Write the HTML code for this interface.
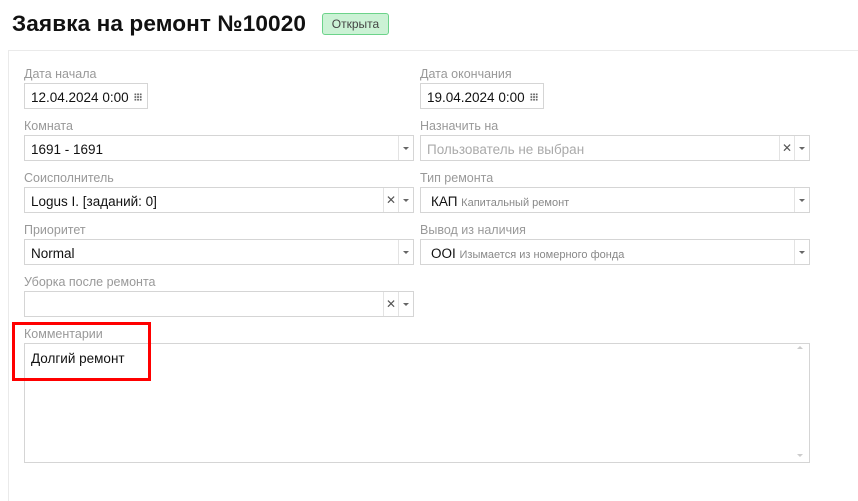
<!DOCTYPE html>
<html style="overflow:hidden;height:501px"><head><meta charset="utf-8"><style>
*{box-sizing:border-box;margin:0;padding:0}
body{width:858px;height:501px;background:#fff;font-family:"Liberation Sans","DejaVu Sans",sans-serif;position:relative;overflow:hidden}
.a{position:absolute}
h1{position:absolute;left:12px;top:11px;font-size:22.6px;font-weight:bold;color:#111;letter-spacing:0.1px}
.badge{position:absolute;left:322px;top:13px;width:67px;height:22px;border:1px solid #6cd38a;background:#cbf2d5;border-radius:3px;color:#444;font-size:12px;text-align:center;line-height:20px}
.panel{position:absolute;left:8px;top:50px;width:860px;height:460px;border:1px solid #eaeaea}
.lbl{position:absolute;font-size:12.5px;color:#999;margin-top:1px}
.in{position:absolute;height:26px;border:1px solid #d5d5d5;font-size:13.5px;color:#111;line-height:27px;padding-left:6px;background:#fff}
.dd{position:absolute;top:0;right:0;width:15px;height:24px;border-left:1px solid #e3e3e3}
.dd:after{content:"";position:absolute;left:4px;top:11px;border-left:3px solid transparent;border-right:3px solid transparent;border-top:3px solid #666}
.x{position:absolute;top:0;right:15px;width:15px;height:24px;border-left:1px solid #e3e3e3;font-size:12px;color:#555;text-align:center;line-height:25px;font-weight:bold}
.grid{position:absolute;right:5px;top:9px;width:8px;height:8px;background:radial-gradient(circle,#666 0.9px,transparent 1.1px);background-size:2.7px 2.7px}
.sm{font-size:11px;color:#888}
</style></head><body>
<h1>Заявка на ремонт №10020</h1>
<div class="badge">Открыта</div>
<div class="panel"></div>

<div class="lbl" style="left:24px;top:66px">Дата начала</div>
<div class="in" style="left:24px;top:83px;width:124px">12.04.2024 0:00<span class="grid"></span></div>
<div class="lbl" style="left:420px;top:66px">Дата окончания</div>
<div class="in" style="left:420px;top:83px;width:124px">19.04.2024 0:00<span class="grid"></span></div>

<div class="lbl" style="left:24px;top:118px">Комната</div>
<div class="in" style="left:24px;top:135px;width:390px">1691 - 1691<span class="dd"></span></div>
<div class="lbl" style="left:420px;top:118px">Назначить на</div>
<div class="in" style="left:420px;top:135px;width:390px;color:#aaa">Пользователь не выбран<span class="x">✕</span><span class="dd"></span></div>

<div class="lbl" style="left:24px;top:170px">Соисполнитель</div>
<div class="in" style="left:24px;top:187px;width:390px">Logus I. [заданий: 0]<span class="x">✕</span><span class="dd"></span></div>
<div class="lbl" style="left:420px;top:170px">Тип ремонта</div>
<div class="in" style="left:420px;top:187px;width:390px;padding-left:10px">КАП <span class="sm">Капитальный ремонт</span><span class="dd"></span></div>

<div class="lbl" style="left:24px;top:222px">Приоритет</div>
<div class="in" style="left:24px;top:239px;width:390px">Normal<span class="dd"></span></div>
<div class="lbl" style="left:420px;top:222px">Вывод из наличия</div>
<div class="in" style="left:420px;top:239px;width:390px;padding-left:10px">OOI <span class="sm">Изымается из номерного фонда</span><span class="dd"></span></div>

<div class="lbl" style="left:24px;top:274px">Уборка после ремонта</div>
<div class="in" style="left:24px;top:291px;width:390px"><span class="x">✕</span><span class="dd"></span></div>

<div class="lbl" style="left:24px;top:326px">Комментарии</div>
<div class="a" style="left:24px;top:343px;width:786px;height:120px;border:1px solid #d5d5d5;font-size:13.5px;color:#111;padding:7px 6px">Долгий ремонт</div>
<div class="a" style="left:797px;top:346px;border-left:3px solid transparent;border-right:3px solid transparent;border-bottom:3px solid #ccc"></div>
<div class="a" style="left:797px;top:454px;border-left:3px solid transparent;border-right:3px solid transparent;border-top:3px solid #ccc"></div>

<div class="a" style="left:12px;top:322px;width:139px;height:59px;border:3px solid #f00"></div>
</body></html>
